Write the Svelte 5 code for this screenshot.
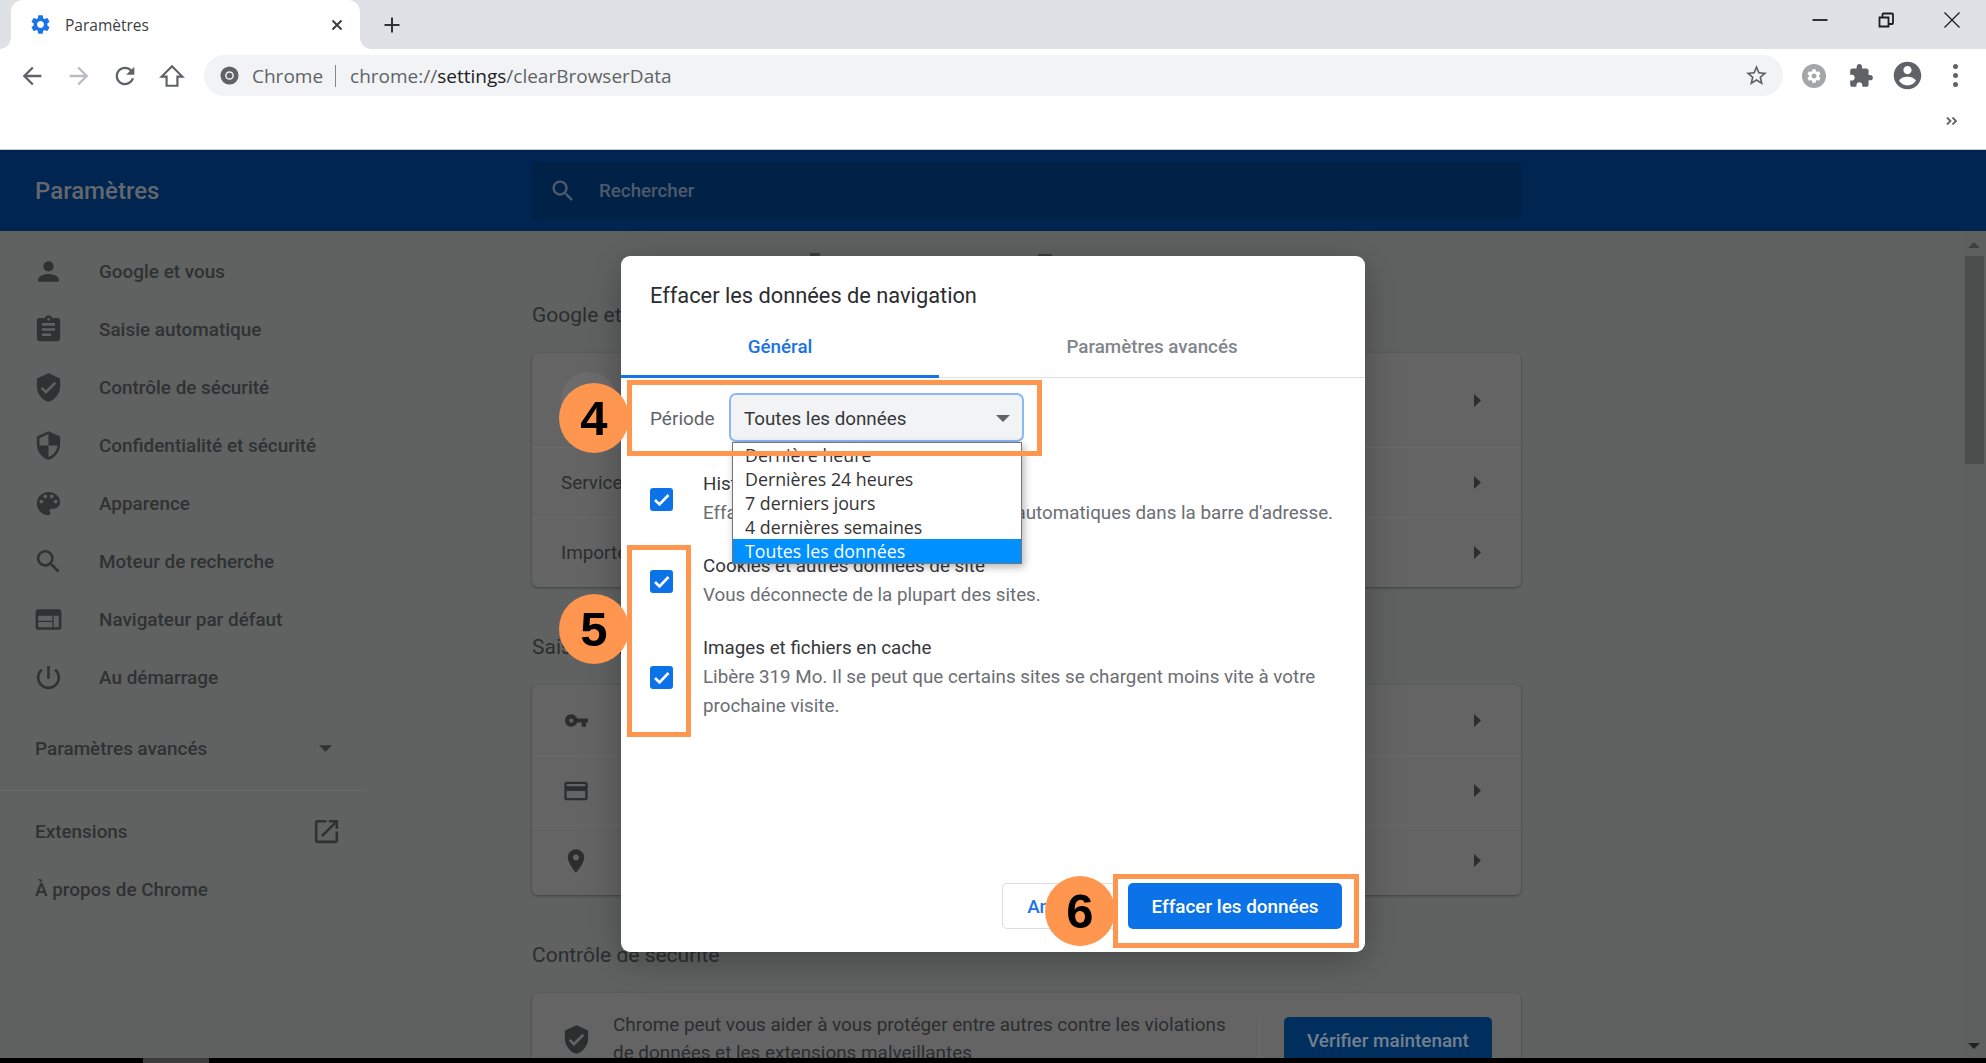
<script>
  const P = {
    person: 'M12 12c2.21 0 4-1.79 4-4s-1.79-4-4-4-4 1.79-4 4 1.79 4 4 4zm0 2c-2.67 0-8 1.34-8 4v2h16v-2c0-2.66-5.33-4-8-4z',
    assignment: 'M19 3h-4.18C14.4 1.84 13.3 1 12 1c-1.3 0-2.4.84-2.82 2H5c-1.1 0-2 .9-2 2v14c0 1.1.9 2 2 2h14c1.1 0 2-.9 2-2V5c0-1.1-.9-2-2-2zm-7 0c.55 0 1 .45 1 1s-.45 1-1 1-1-.45-1-1 .45-1 1-1zm2 14H7v-2h7v2zm3-4H7v-2h10v2zm0-4H7V7h10v2z',
    shieldCheck: 'M12 1L3 5v6c0 5.55 3.84 10.74 9 12 5.16-1.26 9-6.45 9-12V5l-9-4zm-2 16l-4-4 1.41-1.41L10 14.17l6.59-6.59L18 9l-8 8z',
    security: 'M12 1L3 5v6c0 5.55 3.84 10.74 9 12 5.16-1.26 9-6.45 9-12V5l-9-4zm0 10.99h7c-.53 4.12-3.28 7.79-7 8.94V12H5V6.3l7-3.11v8.8z',
    palette: 'M12 3c-4.97 0-9 4.03-9 9s4.03 9 9 9c.83 0 1.5-.67 1.5-1.5 0-.39-.15-.74-.39-1.01-.23-.26-.38-.61-.38-.99 0-.83.67-1.5 1.5-1.5H16c2.76 0 5-2.24 5-5 0-4.42-4.03-8-9-8zm-5.5 9c-.83 0-1.5-.67-1.5-1.5S5.67 9 6.5 9 8 9.67 8 10.5 7.33 12 6.5 12zm3-4C8.67 8 8 7.33 8 6.5S8.67 5 9.5 5s1.5.67 1.5 1.5S10.33 8 9.5 8zm5 0c-.83 0-1.5-.67-1.5-1.5S13.67 5 14.5 5s1.5.67 1.5 1.5S15.33 8 14.5 8zm3 4c-.83 0-1.5-.67-1.5-1.5S16.67 9 17.5 9s1.5.67 1.5 1.5-.67 1.5-1.5 1.5z',
    search: 'M15.5 14h-.79l-.28-.27C15.41 12.59 16 11.11 16 9.5 16 5.91 13.09 3 9.5 3S3 5.91 3 9.5 5.91 16 9.5 16c1.61 0 3.09-.59 4.23-1.57l.27.28v.79l5 4.99L20.49 19l-4.99-5zm-6 0C7.01 14 5 11.99 5 9.5S7.01 5 9.5 5 14 7.01 14 9.5 11.99 14 9.5 14z',
    web: 'M20 4H4c-1.1 0-1.99.9-1.99 2L2 18c0 1.1.9 2 2 2h16c1.1 0 2-.9 2-2V6c0-1.1-.9-2-2-2zm-5 14H4v-4h11v4zm0-5H4V9h11v4zm5 5h-4V9h4v9z',
    power: 'M13 3h-2v10h2V3zm4.83 2.17l-1.42 1.42C17.99 7.86 19 9.81 19 12c0 3.87-3.13 7-7 7s-7-3.13-7-7c0-2.19 1.01-4.14 2.58-5.42L6.17 5.17C4.23 6.82 3 9.26 3 12c0 4.97 4.03 9 9 9s9-4.03 9-9c0-2.74-1.23-5.18-3.17-6.83z',
    openNew: 'M19 19H5V5h7V3H5c-1.11 0-2 .9-2 2v14c0 1.1.89 2 2 2h14c1.1 0 2-.9 2-2v-7h-2v7zM14 3v2h3.59l-9.83 9.83 1.41 1.41L19 6.41V10h2V3h-7z',
    key: 'M12.65 10C11.83 7.67 9.61 6 7 6c-3.31 0-6 2.69-6 6s2.69 6 6 6c2.61 0 4.83-1.67 5.65-4H17v4h4v-4h2v-4H12.65zM7 14c-1.1 0-2-.9-2-2s.9-2 2-2 2 .9 2 2-.9 2-2 2z',
    card: 'M20 4H4c-1.11 0-1.99.89-1.99 2L2 18c0 1.11.89 2 2 2h16c1.11 0 2-.89 2-2V6c0-1.11-.89-2-2-2zm0 14H4v-6h16v6zm0-10H4V6h16v2z',
    place: 'M12 2C8.13 2 5 5.13 5 9c0 5.25 7 13 7 13s7-7.75 7-13c0-3.87-3.13-7-7-7zm0 9.5c-1.38 0-2.5-1.12-2.5-2.5s1.12-2.5 2.5-2.5 2.5 1.12 2.5 2.5-1.12 2.5-2.5 2.5z',
    gear: 'M19.14 12.94c.04-.3.06-.61.06-.94 0-.32-.02-.64-.07-.94l2.03-1.58c.18-.14.23-.41.12-.61l-1.92-3.32c-.12-.22-.37-.29-.59-.22l-2.39.96c-.5-.38-1.03-.7-1.62-.94l-.36-2.54c-.04-.24-.24-.41-.48-.41h-3.84c-.24 0-.43.17-.47.41l-.36 2.54c-.59.24-1.13.57-1.62.94l-2.39-.96c-.22-.08-.47 0-.59.22L2.74 8.87c-.12.21-.08.47.12.61l2.03 1.58c-.05.3-.09.63-.09.94s.02.64.07.94l-2.03 1.58c-.18.14-.23.41-.12.61l1.92 3.32c.12.22.37.29.59.22l2.39-.96c.5.38 1.03.7 1.62.94l.36 2.54c.05.24.24.41.48.41h3.84c.24 0 .44-.17.47-.41l.36-2.54c.59-.24 1.13-.56 1.62-.94l2.39.96c.22.08.47 0 .59-.22l1.92-3.32c.12-.22.07-.47-.12-.61l-2.01-1.58zM12 15.6c-1.98 0-3.6-1.62-3.6-3.6s1.62-3.6 3.6-3.6 3.6 1.62 3.6 3.6-1.62 3.6-3.6 3.6z',
    account: 'M12 2C6.48 2 2 6.48 2 12s4.48 10 10 10 10-4.48 10-10S17.52 2 12 2zm0 3c1.66 0 3 1.34 3 3s-1.34 3-3 3-3-1.34-3-3 1.34-3 3-3zm0 14.2c-2.5 0-4.71-1.28-6-3.22.03-1.99 4-3.08 6-3.08 1.99 0 5.97 1.09 6 3.08-1.29 1.94-3.5 3.22-6 3.22z',
    puzzle: 'M20.5 11H19V7c0-1.1-.9-2-2-2h-4V3.5C13 2.12 11.88 1 10.5 1S8 2.12 8 3.5V5H4c-1.1 0-1.99.9-1.99 2v3.8H3.5c1.49 0 2.7 1.21 2.7 2.7s-1.21 2.7-2.7 2.7H2V20c0 1.1.9 2 2 2h3.8v-1.5c0-1.49 1.21-2.7 2.7-2.7 1.49 0 2.7 1.21 2.7 2.7V22H17c1.1 0 2-.9 2-2v-4h1.5c1.38 0 2.5-1.12 2.5-2.5S21.88 11 20.5 11z',
    star: 'M22 9.24l-7.19-.62L12 2 9.19 8.63 2 9.24l5.46 4.73L5.82 21 12 17.27 18.18 21l-1.63-7.03L22 9.24zM12 15.4l-3.76 2.27 1-4.28-3.32-2.88 4.38-.38L12 6.1l1.71 4.04 4.38.38-3.32 2.88 1 4.28L12 15.4z',
    back: 'M20 11H7.83l5.59-5.59L12 4l-8 8 8 8 1.41-1.41L7.83 13H20v-2z',
    forward: 'M12 4l-1.41 1.41L16.17 11H4v2h12.17l-5.58 5.59L12 20l8-8z',
    refresh: 'M17.65 6.35C16.2 4.9 14.21 4 12 4c-4.42 0-7.99 3.58-7.99 8s3.57 8 7.99 8c3.73 0 6.84-2.55 7.73-6h-2.08c-.82 2.33-3.04 4-5.65 4-3.31 0-6-2.69-6-6s2.69-6 6-6c1.66 0 3.14.69 4.22 1.78L13 11h7V4l-2.35 2.35z'
  };

  const navItems = [
    { label: 'Google et vous', icon: P.person },
    { label: 'Saisie automatique', icon: P.assignment },
    { label: 'Contrôle de sécurité', icon: P.shieldCheck },
    { label: 'Confidentialité et sécurité', icon: P.security },
    { label: 'Apparence', icon: P.palette },
    { label: 'Moteur de recherche', icon: P.search },
    { label: 'Navigateur par défaut', icon: P.web },
    { label: 'Au démarrage', icon: P.power }
  ];
  const options = ['Dernière heure', 'Dernières 24 heures', '7 derniers jours', '4 dernières semaines', 'Toutes les données'];
  const clearItems = [
    { title: 'Historique de navigation', sub: ["Efface l'historique et les saisies semi-automatiques dans la barre d'adresse."] },
    { title: 'Cookies et autres données de site', sub: ['Vous déconnecte de la plupart des sites.'] },
    { title: 'Images et fichiers en cache', sub: ['Libère 319 Mo. Il se peut que certains sites se chargent moins vite à votre', 'prochaine visite.'] }
  ];
  const autofillRows = [
    { d: P.key, cls: 'row-icon key' },
    { d: P.card, cls: 'row-icon small' },
    { d: P.place, cls: 'row-icon small' }
  ];
</script>

{#snippet icon(d, cls)}
  <svg class={cls} viewBox="0 0 24 24" aria-hidden="true"><path {d} /></svg>
{/snippet}

{#snippet chevron()}
  <svg class="chevron" viewBox="0 0 7 13" aria-hidden="true"><polygon points="0,0 7,6.5 0,13" /></svg>
{/snippet}

<div class="page">
  <div class="tabstrip">
    <div class="tab">
      {@render icon(P.gear, 'tab-gear')}
      <span class="tab-title">Paramètres</span>
      <svg class="tab-close" viewBox="0 0 12 12" aria-hidden="true"><path d="M1.5 1.5l9 9M10.500 1.5l-9 9" /></svg>
    </div>
    <svg class="new-tab" viewBox="0 0 18 18" aria-hidden="true"><path d="M9 1.5v15M1.5 9h15" /></svg>
    <div class="window-btns">
      <svg viewBox="0 0 16 16" aria-hidden="true"><path class="heavy" d="M0.500 8h15" /></svg>
      <svg viewBox="0 0 16 16" aria-hidden="true"><path class="heavy" d="M1.500 5.500h9v9h-9zM4.500 5V2.500a1 1 0 0 1 1-1H14a1 1 0 0 1 1 1V11a1 1 0 0 1-1 1h-3" /></svg>
      <svg viewBox="0 0 16 16" aria-hidden="true"><path d="M0.500 0.500l15 15M15.500 0.500l-15 15" /></svg>
    </div>
  </div>

  <div class="toolbar">
    <div class="nav-row">
      <div class="nav-btn">{@render icon(P.back, 'tool-icon')}</div>
      <div class="nav-btn">{@render icon(P.forward, 'tool-icon faint')}</div>
      <div class="nav-btn">{@render icon(P.refresh, 'tool-icon')}</div>
      <div class="nav-btn">
        <svg class="home" viewBox="0 0 24 24" aria-hidden="true"><path d="M12 3L2.500 12.500H7V21h10v-8.500h4.500z" /></svg>
      </div>
      <div class="omnibox">
        <svg class="site-icon" viewBox="0 0 20 20" aria-hidden="true">
          <circle cx="10" cy="10" r="9.500" fill="#5f6368" />
          <circle cx="10" cy="10" r="4.600" fill="#f1f3f4" />
          <circle cx="10" cy="10" r="3" fill="#5f6368" />
        </svg>
        <span class="chip">Chrome</span>
        <span class="omni-sep"></span>
        <span class="url">chrome://<b>settings</b>/clearBrowserData</span>
        {@render icon(P.star, 'star')}
      </div>
      <div class="ext-icons">
        <svg class="ext-badge" viewBox="0 0 24 24" aria-hidden="true">
          <circle cx="12" cy="12" r="12" fill="#a3a6a9" />
          <path transform="translate(3.600 3.600) scale(.7)" fill="#fff" d={P.gear} />
        </svg>
        {@render icon(P.puzzle, 'puzzle')}
        {@render icon(P.account, 'account')}
        <div class="dots"><i></i><i></i><i></i></div>
      </div>
    </div>
    <div class="bookmarks">
      <svg class="more" viewBox="0 0 12 8" aria-hidden="true"><path d="M1 0.500L4.500 4 1 7.500M6.500 0.500L10 4 6.500 7.500" /></svg>
    </div>
  </div>

  <header class="settings-header">
    <div class="header-title">Paramètres</div>
    <div class="searchbox">
      {@render icon(P.search, 'search-icon')}
      <span>Rechercher</span>
    </div>
  </header>

  <div class="body">
    <aside class="sidebar">
      <nav class="side-nav">
        {#each navItems as item}
          <div class="nav-item">
            {@render icon(item.icon, 'nav-icon')}
            <span>{item.label}</span>
          </div>
        {/each}
        <div class="nav-plain advanced">
          <span>Paramètres avancés</span>
          <svg class="caret" viewBox="0 0 12 6" aria-hidden="true"><polygon points="0,0 12,0 6,6" /></svg>
        </div>
        <div class="side-rule"></div>
        <div class="nav-plain">
          <span>Extensions</span>
          {@render icon(P.openNew, 'open-new')}
        </div>
        <div class="nav-plain"><span>À propos de Chrome</span></div>
      </nav>
    </aside>

    <main class="main">
      <h2 class="first">Google et vous</h2>
      <section class="card">
        <div class="row tall">
          <div class="avatar"></div>
          {@render chevron()}
        </div>
        <div class="row"><span>Services Google et synchronisation</span>{@render chevron()}</div>
        <div class="row"><span>Importer les favoris et les paramètres</span>{@render chevron()}</div>
      </section>

      <h2>Saisie automatique</h2>
      <section class="card">
        {#each autofillRows as r}
          <div class="row">{@render icon(r.d, r.cls)}{@render chevron()}</div>
        {/each}
      </section>

      <h2>Contrôle de sécurité</h2>
      <section class="card">
        <div class="safety">
          {@render icon(P.shieldCheck, 'row-icon')}
          <p>Chrome peut vous aider à vous protéger entre autres contre les violations de données et les extensions malveillantes</p>
          <div class="v-rule"></div>
          <div class="check-btn">Vérifier maintenant</div>
        </div>
      </section>
    </main>

    <div class="scrollbar">
      <svg viewBox="0 0 12 6" aria-hidden="true"><polygon points="6,0 12,6 0,6" /></svg>
      <div class="thumb"></div>
      <svg class="down" viewBox="0 0 12 6" aria-hidden="true"><polygon points="0,0 12,0 6,6" /></svg>
    </div>
  </div>

  <div class="taskbar"><span></span></div>

  <i class="peek peek-a"></i>
  <i class="peek peek-b"></i>

  <div class="dialog">
    <div class="dlg-title">Effacer les données de navigation</div>
    <div class="dlg-tabs">
      <div class="dlg-tab active">Général</div>
      <div class="dlg-tab">Paramètres avancés</div>
    </div>
    <div class="period">
      <span class="period-label">Période</span>
      <div class="select">
        <span>Toutes les données</span>
        <svg viewBox="0 0 14 7" aria-hidden="true"><polygon points="0,0 14,0 7,7" /></svg>
      </div>
    </div>
    <div class="clear-list">
      {#each clearItems as item}
        <div class="clear-item">
          <svg class="checkbox" viewBox="0 0 23 23" aria-hidden="true">
            <rect width="23" height="23" rx="3" fill="#0b72e7" />
            <path d="M5 12l4.500 4.500L18.500 7" fill="none" stroke="#fff" stroke-width="2.600" />
          </svg>
          <div class="clear-text">
            <div class="clear-title">{item.title}</div>
            {#each item.sub as line}
              <div class="clear-sub">{line}</div>
            {/each}
          </div>
        </div>
      {/each}
    </div>
    <div class="dlg-footer">
      <div class="btn-cancel">Annuler</div>
      <div class="btn-primary">Effacer les données</div>
    </div>
  </div>

  <div class="dropdown">
    {#each options as opt, i}
      <div class="option" class:selected={i === options.length - 1}>{opt}</div>
    {/each}
  </div>

  <div class="mark mark-4"></div>
  <div class="mark mark-5"></div>
  <div class="mark mark-6"></div>
  <div class="step step-4">4</div>
  <div class="step step-5">5</div>
  <div class="step step-6">6</div>
</div>

<style>
  :global(body) {
    margin: 0;
    background: #606261;
    font-family: Roboto, "Liberation Sans", sans-serif;
  }

  .page {
    position: relative;
    height: 1063px;
    display: flex;
    flex-direction: column;
    overflow: hidden;
  }

  svg {
    display: block;
    flex: none;
  }

  /* tab strip */
  .tabstrip {
    height: 49px;
    flex: none;
    background: #dee1e6;
    display: flex;
    align-items: flex-end;
    padding-left: 11px;
  }

  .tab {
    position: relative;
    width: 349px;
    height: 49px;
    box-sizing: border-box;
    background: #fff;
    border-radius: 12px 12px 0 0;
    display: flex;
    align-items: center;
    padding-left: 18px;
  }

  .tab::before,
  .tab::after {
    content: '';
    position: absolute;
    bottom: 0;
    width: 11px;
    height: 11px;
  }

  .tab::before {
    left: -11px;
    background: radial-gradient(circle at 0 0, transparent 10.500px, #fff 11px);
  }

  .tab::after {
    right: -11px;
    background: radial-gradient(circle at 100% 0, transparent 10.500px, #fff 11px);
  }

  .tab-gear {
    width: 23px;
    height: 23px;
    fill: #1a73e8;
  }

  .tab-title {
    margin-left: 13px;
    font: 400 15.500px "Open Sans", sans-serif;
    color: #3c4043;
    flex: 1;
  }

  .tab-close {
    width: 12px;
    height: 12px;
    margin-right: 17px;
    fill: none;
    stroke: #3c4043;
    stroke-width: 2;
  }

  .new-tab {
    width: 18px;
    height: 18px;
    margin: 0 0 15px 23px;
    fill: none;
    stroke: #303236;
    stroke-width: 2;
  }

  .window-btns {
    margin-left: auto;
    display: flex;
    gap: 50px;
    padding: 0 26px 21px 0;
  }

  .window-btns svg {
    width: 16px;
    height: 16px;
    fill: none;
    stroke: #1c1d1f;
    stroke-width: 1.300;
  }

  .window-btns .heavy {
    stroke-width: 1.800;
  }

  /* toolbar */
  .toolbar {
    height: 101px;
    flex: none;
    box-sizing: border-box;
    background: #fff;
    border-bottom: 1px solid #c9cdd0;
  }

  .nav-row {
    display: flex;
    align-items: center;
    height: 41px;
    margin-top: 6px;
    padding-left: 9px;
  }

  .nav-btn {
    width: 46.500px;
    display: flex;
    justify-content: center;
  }

  .tool-icon {
    width: 28px;
    height: 28px;
    fill: #5f6368;
  }

  .tool-icon.faint {
    fill: #b9bcc0;
  }

  .home {
    width: 26px;
    height: 26px;
    fill: none;
    stroke: #5f6368;
    stroke-width: 2;
  }

  .omnibox {
    margin-left: 9px;
    width: 1579px;
    height: 41px;
    background: #f1f3f4;
    border-radius: 21px;
    display: flex;
    align-items: center;
    padding-left: 16px;
    box-sizing: border-box;
    font: 400 19px "Open Sans", sans-serif;
    color: #5f6368;
  }

  .site-icon {
    width: 19px;
    height: 19px;
  }

  .chip {
    margin-left: 13px;
  }

  .omni-sep {
    width: 1px;
    height: 22px;
    background: #80868b;
    margin: 0 14px 0 12px;
  }

  .url b {
    font-weight: 400;
    color: #202124;
  }

  .star {
    width: 25px;
    height: 25px;
    fill: #5f6368;
    margin-left: auto;
    margin-right: 14px;
  }

  .ext-icons {
    display: flex;
    align-items: center;
    margin-left: 19px;
  }

  .ext-badge {
    width: 24px;
    height: 24px;
  }

  .puzzle {
    width: 26px;
    height: 26px;
    fill: #5f6368;
    margin-left: 22px;
  }

  .account {
    width: 33px;
    height: 33px;
    fill: #5f6368;
    margin-left: 17px;
  }

  .dots {
    display: flex;
    flex-direction: column;
    gap: 4px;
    margin-left: 29px;
  }

  .dots i {
    width: 5px;
    height: 5px;
    border-radius: 50%;
    background: #5f6368;
  }

  .bookmarks {
    display: flex;
    justify-content: flex-end;
    padding: 21px 28px 0 0;
  }

  .more {
    width: 12px;
    height: 8px;
    fill: none;
    stroke: #5f6368;
    stroke-width: 1.800;
  }

  /* settings header */
  .settings-header {
    height: 81px;
    flex: none;
    background: #002550;
    display: flex;
    align-items: center;
    padding-left: 35px;
  }

  .header-title {
    width: 497px;
    font-size: 24px;
    font-weight: 500;
    color: #63686e;
  }

  .searchbox {
    width: 989px;
    height: 57px;
    background: #002146;
    display: flex;
    align-items: center;
    box-sizing: border-box;
    padding-left: 17px;
    font-size: 18.750px;
    font-weight: 500;
    color: #4d5a6b;
  }

  .search-icon {
    width: 28px;
    height: 28px;
    fill: #4d5a6b;
    margin-right: 22px;
  }

  /* page body */
  .body {
    flex: 1;
    min-height: 0;
    display: flex;
    background: #606261;
    overflow: hidden;
  }

  .sidebar {
    width: 532px;
    flex: none;
  }

  .side-nav {
    width: 363px;
    padding-top: 11px;
  }

  .nav-item {
    height: 58px;
    display: flex;
    align-items: center;
    padding-left: 33px;
    font-size: 18.900px;
    font-weight: 500;
    color: #2f3133;
  }

  .nav-icon {
    width: 31px;
    height: 31px;
    fill: #2f3133;
    margin-right: 35px;
  }

  .nav-plain {
    height: 58px;
    display: flex;
    align-items: center;
    justify-content: space-between;
    padding: 0 21px 0 35px;
    font-size: 18.900px;
    font-weight: 500;
    color: #2f3133;
  }

  .advanced {
    margin-top: 13px;
    padding-right: 31px;
  }

  .caret {
    width: 13px;
    height: 7px;
    fill: #2f3133;
  }

  .open-new {
    width: 31px;
    height: 31px;
    fill: #2f3133;
  }

  .side-rule {
    height: 1px;
    background: #696b6a;
    margin: 13px 0 11px;
  }

  .main {
    width: 989px;
    flex: none;
    padding-top: 72px;
  }

  h2 {
    margin: 48px 0 26px;
    font-size: 21px;
    font-weight: 400;
    line-height: 24px;
    color: #2b2d2f;
  }

  h2.first {
    margin-top: 0;
  }

  .card {
    background: #646464;
    border-radius: 6px;
    box-shadow: 0 1px 3px rgba(0, 0, 0, .35);
  }

  .row {
    height: 70px;
    display: flex;
    align-items: center;
    justify-content: space-between;
    padding: 0 40px 0 29px;
    font-size: 18.900px;
    color: #2b2d2f;
    border-top: 1px solid #696b6a;
    box-sizing: border-box;
  }

  .row:first-child {
    border-top: none;
  }

  .row.tall {
    height: 94px;
  }

  .avatar {
    width: 56px;
    height: 56px;
    border-radius: 50%;
    background: #6c6c6c;
  }

  .chevron {
    width: 7px;
    height: 13px;
    fill: #2b2d2f;
  }

  .row-icon {
    width: 31px;
    height: 31px;
    fill: #2b2d2f;
  }

  .row-icon.key {
    width: 25px;
    height: 25px;
    margin-left: 3px;
  }

  .row-icon.small {
    width: 28px;
    height: 28px;
    margin-left: 1px;
  }

  .safety {
    display: flex;
    align-items: flex-start;
    padding: 18px 29px 0;
    height: 100px;
    box-sizing: border-box;
  }

  .safety .row-icon {
    margin-top: 13px;
  }

  .safety p {
    width: 620px;
    margin: 0 0 0 21px;
    font-size: 18.900px;
    line-height: 28px;
    color: #2b2d2f;
  }

  .v-rule {
    width: 1px;
    height: 60px;
    background: #6c6e6c;
    margin: 6px 0 0 26px;
  }

  .check-btn {
    width: 208px;
    height: 46px;
    margin: 6px 0 0 24px;
    border-radius: 5px;
    background: #002f5e;
    color: #72808f;
    font-size: 18.900px;
    font-weight: 500;
    display: flex;
    align-items: center;
    justify-content: center;
  }

  .scrollbar {
    margin-left: auto;
    width: 24px;
    flex: none;
    background: #5e605f;
    display: flex;
    flex-direction: column;
    align-items: center;
    padding-top: 11px;
    box-sizing: border-box;
  }

  .scrollbar svg {
    width: 12px;
    height: 6px;
    fill: #3e3f3f;
  }

  .thumb {
    width: 19px;
    height: 208px;
    margin-top: 8px;
    background: #4c4d4d;
  }

  .scrollbar .down {
    margin-top: auto;
    margin-bottom: 9px;
    fill: #222;
  }

  .taskbar {
    height: 5px;
    flex: none;
    background: #000;
    padding-left: 143px;
  }

  .taskbar span {
    display: block;
    width: 66px;
    height: 5px;
    background: #3b3b3b;
  }

  .peek {
    position: absolute;
    top: 253px;
    height: 3px;
    background: #3a3c3e;
  }

  .peek-a {
    left: 810px;
    width: 10px;
  }

  .peek-b {
    left: 1038px;
    width: 14px;
    height: 2px;
    top: 254px;
  }

  /* dialog */
  .dialog {
    position: absolute;
    left: 621px;
    top: 256px;
    width: 744px;
    height: 696px;
    background: #fff;
    border-radius: 9px;
    box-shadow: 0 8px 36px rgba(0, 0, 0, .28);
    display: flex;
    flex-direction: column;
  }

  .dlg-title {
    padding: 27px 30px 0 29px;
    font-size: 21.800px;
    line-height: 26px;
    color: #2b2c2f;
  }

  .dlg-tabs {
    display: flex;
    border-bottom: 1px solid #dfe1e5;
  }

  .dlg-tab {
    width: 50%;
    box-sizing: border-box;
    padding-top: 26px;
    height: 68px;
    text-align: center;
    font-size: 18.800px;
    line-height: 24px;
    font-weight: 500;
    color: #80868b;
    position: relative;
  }

  .dlg-tab.active {
    width: 318px;
    color: #1a73e8;
  }

  .dlg-tab.active::after {
    content: '';
    position: absolute;
    left: 0;
    right: 0;
    bottom: -1px;
    height: 3px;
    background: #1a73e8;
  }

  .dlg-tab:not(.active) {
    width: 426px;
  }

  .period {
    display: flex;
    align-items: center;
    padding: 15px 0 0 29px;
  }

  .period-label {
    width: 79px;
    padding-top: 2px;
    font-size: 19px;
    color: #5f6368;
  }

  .select {
    width: 295px;
    height: 49px;
    box-sizing: border-box;
    border: 2px solid #8ab8f5;
    border-radius: 7px;
    background: #f1f3f4;
    display: flex;
    align-items: center;
    justify-content: space-between;
    padding: 2px 12px 0 13px;
    font-size: 18.800px;
    color: #35373a;
  }

  .select svg {
    width: 14px;
    height: 7px;
    fill: #5f6368;
  }

  .clear-list {
    padding: 28px 29px 0;
    display: flex;
    flex-direction: column;
    gap: 24px;
  }

  .clear-item {
    display: flex;
    align-items: center;
    gap: 30px;
  }

  .checkbox {
    width: 23px;
    height: 23px;
  }

  .clear-title,
  .clear-sub {
    font-size: 18.800px;
    line-height: 29px;
    color: #35373a;
    white-space: nowrap;
  }

  .clear-sub {
    color: #6a6e73;
  }

  .dlg-footer {
    margin-top: auto;
    display: flex;
    justify-content: flex-end;
    gap: 10px;
    padding: 0 23px 23px 0;
  }

  .btn-cancel,
  .btn-primary {
    height: 46px;
    box-sizing: border-box;
    border-radius: 5px;
    display: flex;
    align-items: center;
    justify-content: center;
    font-size: 18.900px;
    font-weight: 500;
  }

  .btn-cancel {
    width: 116px;
    border: 1px solid #dadce0;
    color: #1a73e8;
  }

  .btn-primary {
    width: 214px;
    background: #0b72e7;
    color: #fff;
  }

  /* native select popup */
  .dropdown {
    position: absolute;
    left: 732px;
    top: 442px;
    width: 290px;
    box-sizing: border-box;
    background: #fff;
    border: 1px solid #767676;
    box-shadow: 2px 3px 8px rgba(0, 0, 0, .3);
  }

  .option {
    height: 24px;
    padding-left: 12px;
    font: 400 17.800px/24px "Open Sans", sans-serif;
    color: #333;
  }

  .option.selected {
    background: #0090ff;
    color: #fff;
  }

  /* annotations */
  .mark {
    position: absolute;
    box-sizing: border-box;
    border: 5px solid #ff9650;
  }

  .mark-4 {
    left: 627px;
    top: 380px;
    width: 415px;
    height: 76px;
  }

  .mark-5 {
    left: 627px;
    top: 545px;
    width: 64px;
    height: 192px;
  }

  .mark-6 {
    left: 1113px;
    top: 874px;
    width: 246px;
    height: 74px;
  }

  .step {
    position: absolute;
    width: 70px;
    height: 70px;
    border-radius: 50%;
    background: #ff9650;
    display: flex;
    align-items: center;
    justify-content: center;
    font: 700 49px "Liberation Sans", sans-serif;
    color: #000;
  }

  .step-4 {
    left: 559px;
    top: 383px;
  }

  .step-5 {
    left: 559px;
    top: 594px;
  }

  .step-6 {
    left: 1045px;
    top: 876px;
  }
</style>
